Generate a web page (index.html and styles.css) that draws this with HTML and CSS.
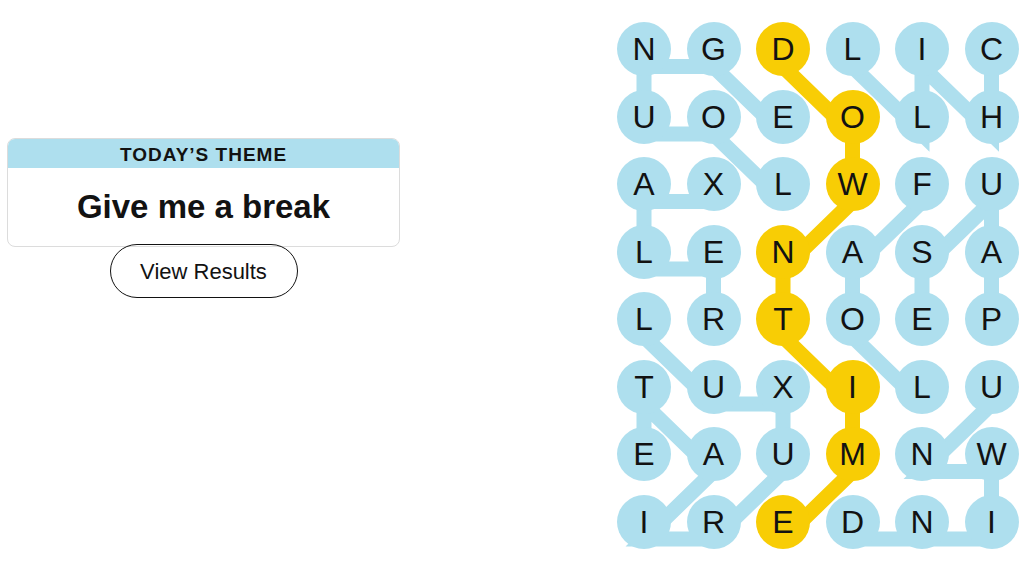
FILE: index.html
```html
<!DOCTYPE html>
<html lang="en">
<head>
  <meta charset="UTF-8" />
  <meta name="viewport" content="width=device-width, initial-scale=1.0"/>
  <title>Strands</title>
  <link rel="stylesheet" href="styles.css">
</head>
<body>
  <div class="game">
    <div class="sidebar">
      <div class="theme-card">
        <div class="theme-head">TODAY’S THEME</div>
        <div class="theme-body">Give me a break</div>
      </div>
      <button class="results-btn">View Results</button>
    </div>

    <div class="board">
      <svg class="lines" viewBox="0 0 401.5 526.5">
        <g class="blue">
          <!-- lounge -->
          <polyline points="166,179.5 96.5,112 27,112 27,44.5 96.5,44.5 166,112" />
          <!-- relax -->
          <polyline points="96.5,314.5 96.5,247 27,247 27,179.5 96.5,179.5" />
          <!-- chill -->
          <polyline points="374.5,44.5 374.5,112 305,44.5 305,112 235.5,44.5" />
          <!-- loaf -->
          <polyline points="305,382 235.5,314.5 235.5,247 305,179.5" />
          <!-- pause -->
          <polyline points="374.5,314.5 374.5,247 374.5,179.5 305,247 305,314.5" />
          <!-- unwind -->
          <polyline points="374.5,382 305,449.5 374.5,449.5 374.5,517 305,517 235.5,517" />
          <!-- luxuriate -->
          <polyline points="27,314.5 96.5,382 166,382 166,449.5 96.5,517 27,517 96.5,449.5 27,382 27,449.5" />
        </g>
        <g class="gold">
          <!-- downtime -->
          <polyline points="166,44.5 235.5,112 235.5,179.5 166,247 166,314.5 235.5,382 235.5,449.5 166,517" />
        </g>
      </svg>

      <button class="cell">N</button>
      <button class="cell">G</button>
      <button class="cell gold">D</button>
      <button class="cell">L</button>
      <button class="cell">I</button>
      <button class="cell">C</button>

      <button class="cell">U</button>
      <button class="cell">O</button>
      <button class="cell">E</button>
      <button class="cell gold">O</button>
      <button class="cell">L</button>
      <button class="cell">H</button>

      <button class="cell">A</button>
      <button class="cell">X</button>
      <button class="cell">L</button>
      <button class="cell gold">W</button>
      <button class="cell">F</button>
      <button class="cell">U</button>

      <button class="cell">L</button>
      <button class="cell">E</button>
      <button class="cell gold">N</button>
      <button class="cell">A</button>
      <button class="cell">S</button>
      <button class="cell">A</button>

      <button class="cell">L</button>
      <button class="cell">R</button>
      <button class="cell gold">T</button>
      <button class="cell">O</button>
      <button class="cell">E</button>
      <button class="cell">P</button>

      <button class="cell">T</button>
      <button class="cell">U</button>
      <button class="cell">X</button>
      <button class="cell gold">I</button>
      <button class="cell">L</button>
      <button class="cell">U</button>

      <button class="cell">E</button>
      <button class="cell">A</button>
      <button class="cell">U</button>
      <button class="cell gold">M</button>
      <button class="cell">N</button>
      <button class="cell">W</button>

      <button class="cell">I</button>
      <button class="cell">R</button>
      <button class="cell gold">E</button>
      <button class="cell">D</button>
      <button class="cell">N</button>
      <button class="cell">I</button>
    </div>
  </div>
</body>
</html>
```

FILE: styles.css
```css
body {
  margin: 0;
  padding: 0;
  font-family: 'Liberation Sans', Arial, sans-serif;
  background: #fff;
  color: #121212;
}
.game {
  display: flex;
  align-items: flex-start;
  padding: 22px 0 0 7px;
}
.sidebar {
  width: 393px;
  margin-top: 116px;
  margin-right: 217px;
  display: flex;
  flex-direction: column;
  align-items: center;
}
.theme-card {
  width: 100%;
  box-sizing: border-box;
  border: 1px solid #dcdcdc;
  border-radius: 8px;
  overflow: hidden;
}
.theme-head {
  background: #aedfee;
  height: 29px;
  line-height: 31px;
  text-align: center;
  font-size: 19px;
  font-weight: bold;
  letter-spacing: 1px;
}
.theme-body {
  height: 78px;
  line-height: 77px;
  text-align: center;
  font-size: 33px;
  font-weight: bold;
}
.results-btn {
  margin-top: -3px;
  width: 188px;
  height: 54px;
  padding: 2px 0 0;
  border: 1px solid #121212;
  border-radius: 27px;
  background: transparent;
  color: #121212;
  font-family: inherit;
  font-size: 22px;
  cursor: pointer;
}
.board {
  position: relative;
  display: grid;
  grid-template-columns: repeat(6, 54px);
  grid-auto-rows: 54px;
  column-gap: 15.5px;
  row-gap: 13.5px;
}
.lines {
  position: absolute;
  left: 0;
  top: 0;
  width: 401.5px;
  height: 526.5px;
  overflow: visible;
}
.lines polyline {
  fill: none;
  stroke-width: 15;
}
.lines .blue polyline { stroke: #aedfee; }
.lines .gold polyline { stroke: #f8cd05; }
.cell {
  position: relative;
  width: 54px;
  height: 54px;
  padding: 0;
  border: none;
  border-radius: 50%;
  background: #aedfee;
  color: #121212;
  font-family: inherit;
  font-size: 32px;
  line-height: 54px;
  cursor: pointer;
}
.cell.gold { background: #f8cd05; }
```
